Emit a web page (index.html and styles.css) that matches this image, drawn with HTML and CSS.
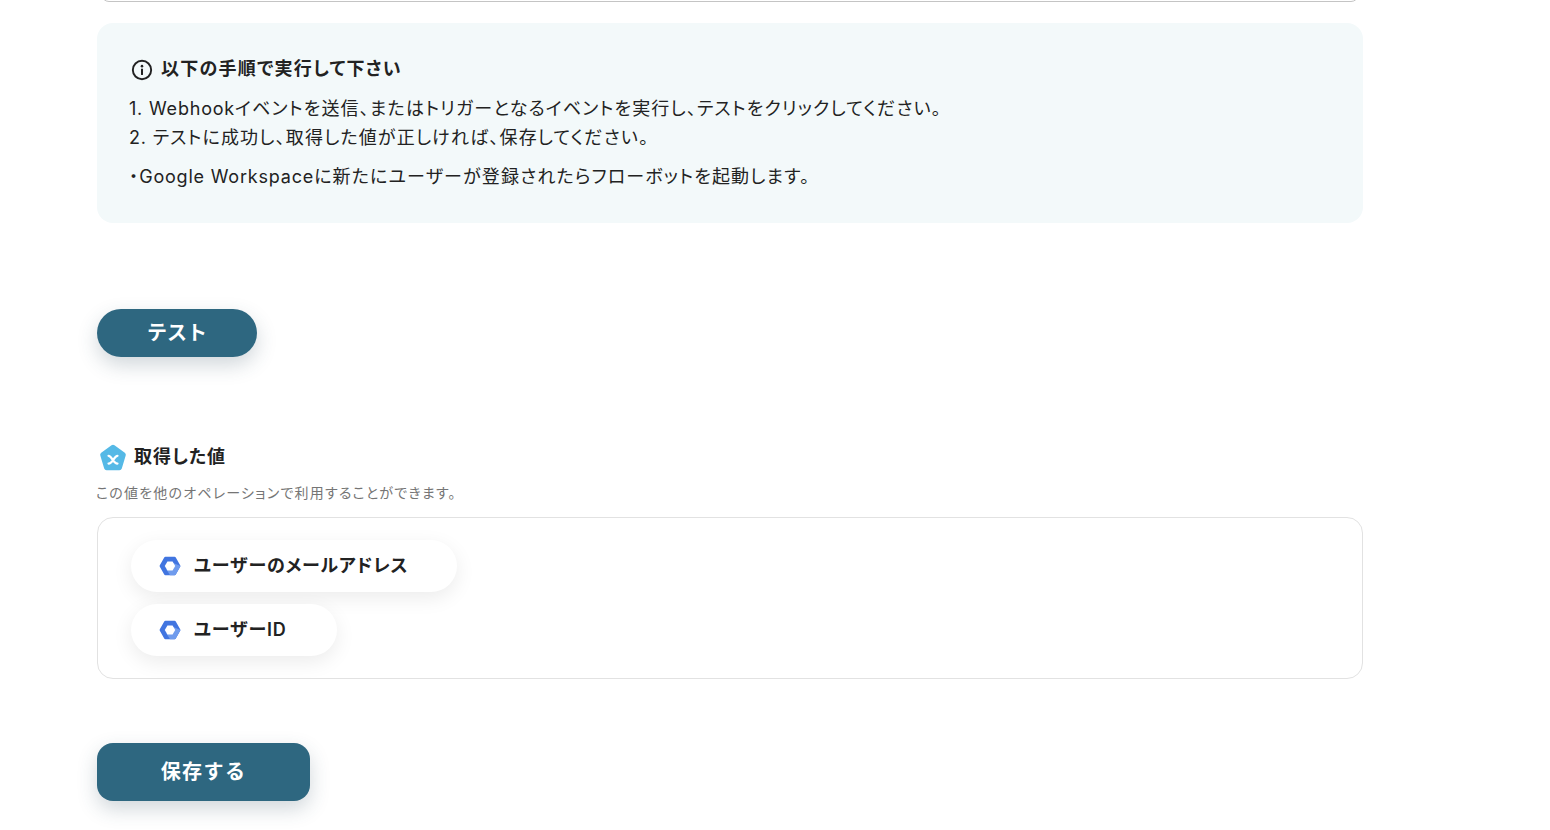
FILE: index.html
```html
<!DOCTYPE html>
<html lang="ja">
<head>
<meta charset="utf-8">
<title>取得した値</title>
<link rel="stylesheet" href="styles.css">
</head>
<body>
<main class="page">
  <div class="field-clip"><div class="field"></div></div>
  <section class="notice">
    <h2 class="notice-title">
      <svg class="info-icon" viewBox="0 0 24 24" aria-hidden="true"><circle cx="12" cy="12" r="10" fill="none" stroke="#222" stroke-width="2.100"/><rect x="10.900" y="10.600" width="2.200" height="6.800" fill="#222"/><circle cx="12" cy="7.800" r="1.400" fill="#222"/></svg>
      <span>以下の手順で実行して下さい</span>
    </h2>
    <ol class="steps">
      <li><span class="lat">1. Webhook</span>イベントを送信、またはトリガーとなるイベントを実行し、テストをクリックしてください。</li>
      <li><span class="lat">2. </span>テストに成功し、取得した値が正しければ、保存してください。</li>
    </ol>
    <p class="note">・<span class="lat">Google Workspace</span>に新たにユーザーが登録されたらフローボットを起動します。</p>
  </section>
  <button class="btn btn-test" type="button"><span class="btn-label">テスト</span></button>
  <section class="values">
    <h2 class="values-title">
      <svg class="pent-icon" viewBox="0 0 28 28" aria-hidden="true"><path d="M12.500 2.300a2.500 2.500 0 0 1 3 0l10.300 7.400a2.500 2.500 0 0 1 .9 2.800l-3.900 13.100a2.500 2.500 0 0 1-2.400 1.700H7.600a2.500 2.500 0 0 1-2.400-1.700L1.300 12.500a2.500 2.500 0 0 1 .9-2.800z" fill="#55b9e6"/><path d="M9.500 12.800c3.500 0 4.500 7.800 9 7.800M18.500 12.800c-3.500 0-4.500 7.800-9 7.800" fill="none" stroke="#fff" stroke-width="2.200" stroke-linecap="round"/></svg>
      <span>取得した値</span>
    </h2>
    <p class="values-desc">この値を他のオペレーションで利用することができます。</p>
    <div class="values-box">
      <div class="chip chip-mail">
        <svg class="gw-icon" viewBox="0 0 24 24" aria-hidden="true"><path d="M7 2h10a1.500 1.500 0 0 1 1.300.75l4.800 8.400a1.700 1.700 0 0 1 0 1.700l-4.800 8.400A1.500 1.500 0 0 1 17 22H7a1.500 1.500 0 0 1-1.300-.75L.9 12.850a1.700 1.700 0 0 1 0-1.700l4.800-8.400A1.500 1.500 0 0 1 7 2z" fill="#4175e0"/><path d="M15 8.500l8.500 3.500-5.200 9.250A1.500 1.500 0 0 1 17 22h-5l-4-6.500z" fill="#6f9bed"/><path d="M9.200 7h5.600l2.900 5-2.900 5H9.200l-2.900-5z" fill="#fff"/></svg>
        <span>ユーザーのメールアドレス</span>
      </div>
      <div class="chip chip-id">
        <svg class="gw-icon" viewBox="0 0 24 24" aria-hidden="true"><path d="M7 2h10a1.500 1.500 0 0 1 1.300.75l4.800 8.400a1.700 1.700 0 0 1 0 1.700l-4.800 8.400A1.500 1.500 0 0 1 17 22H7a1.500 1.500 0 0 1-1.300-.75L.9 12.850a1.700 1.700 0 0 1 0-1.700l4.800-8.400A1.500 1.500 0 0 1 7 2z" fill="#4175e0"/><path d="M15 8.500l8.500 3.500-5.200 9.250A1.500 1.500 0 0 1 17 22h-5l-4-6.500z" fill="#6f9bed"/><path d="M9.200 7h5.600l2.900 5-2.900 5H9.200l-2.900-5z" fill="#fff"/></svg>
        <span>ユーザーID</span>
      </div>
    </div>
  </section>
  <button class="btn btn-save" type="button"><span class="btn-label">保存する</span></button>
</main>
</body>
</html>
```
FILE: styles.css
```css
* { box-sizing: border-box; }
html, body { margin: 0; padding: 0; background: #fff; height: 830px; overflow: hidden; }
body { font-family: Inter, "Noto Sans CJK JP", "Noto Sans", sans-serif; color: #222; font-feature-settings: "palt"; }
.page { width: 1266px; margin-left: 97px; display: flex; flex-direction: column; align-items: flex-start; }
.field-clip { width: 100%; height: 2px; overflow: hidden; padding: 0 4px; }
.field { height: 20px; margin-top: -18px; border: 1px solid #c4c4c4; border-radius: 8px; }
.notice { width: 100%; height: 200px; margin-top: 21px; padding: 33px 32px 0; background: #f3f9fa; border-radius: 16px; }
.notice-title { display: flex; align-items: center; gap: 8px; margin: 0 0 0 2px; font-size: 18px; line-height: 26px; font-weight: 600; letter-spacing: 1.25px; }
.info-icon { width: 22px; height: 22px; flex: none; margin-top: 2px; }
.steps { list-style: none; margin: 12px 0 0; padding: 0; font-size: 18px; line-height: 29px; letter-spacing: 1.15px; }
.note { margin: 10px 0 0; font-size: 18px; line-height: 29px; letter-spacing: 1.15px; }
.lat { letter-spacing: .8px; }
.btn { display: block; border: 0; background: #2e6780; color: #fff; font-family: inherit; font-weight: 600; font-size: 20px; box-shadow: 0 8px 20px rgba(46,74,90,.22); }
.btn-label { display: block; margin-top: -4px; }
.btn-test { width: 160px; height: 48px; margin-top: 86px; border-radius: 24px; }
.values { width: 100%; margin-top: 86px; }
.values-title { display: flex; align-items: center; gap: 7px; margin: 0 0 0 2px; font-size: 18px; line-height: 28px; font-weight: 600; letter-spacing: 1px; }
.pent-icon { width: 28px; height: 28px; flex: none; }
.values-desc { margin: 12px 0 0 -1px; font-size: 14px; line-height: 20px; color: #757575; letter-spacing: 1.2px; }
.values-box { height: 162px; margin-top: 14px; padding: 22px 33px 0; border: 1px solid #e2e2e2; border-radius: 16px; display: flex; flex-direction: column; align-items: flex-start; gap: 12px; }
.chip { height: 52px; display: flex; align-items: center; gap: 13px; padding: 0 0 4px 28px; background: #fff; border-radius: 26px; font-size: 18px; font-weight: 600; letter-spacing: .8px; box-shadow: 0 6px 20px rgba(0,0,0,.08); }
.chip-mail { width: 326px; }
.chip-id { width: 206px; }
.gw-icon { width: 22px; height: 22px; flex: none; margin-top: 4px; }
.btn-save { width: 213px; height: 58px; margin-top: 64px; border-radius: 16px; letter-spacing: 1.4px; }
```
